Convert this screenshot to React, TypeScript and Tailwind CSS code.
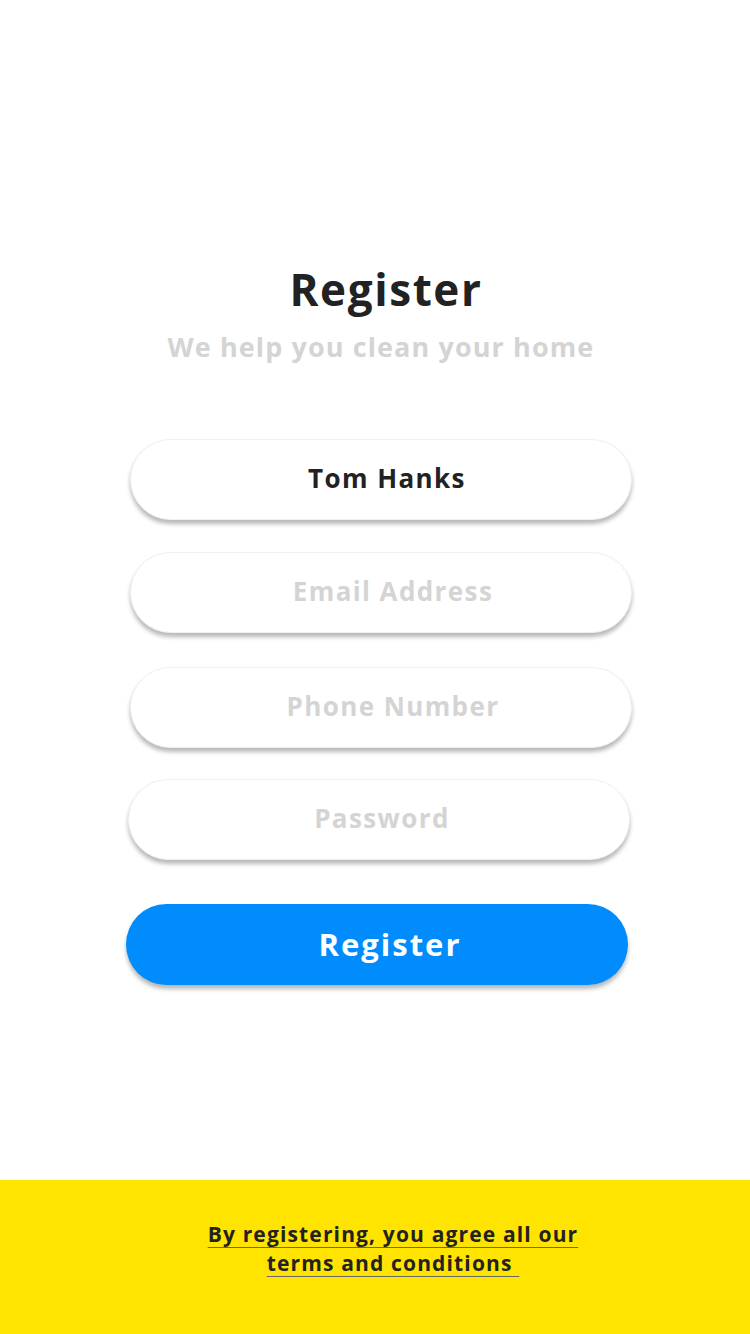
import { useState } from "react"

function Field({ value, placeholder, type = "text", onChange, className = "" }: { value: string; placeholder: string; type?: string; onChange: (v: string) => void; className?: string }) {
  return (
    <input
      type={type}
      value={value}
      placeholder={placeholder}
      onChange={(e) => onChange(e.target.value)}
      className={`w-[502px] h-[81px] rounded-full bg-white border border-[#f0f0f0] shadow-[0_4px_4px_rgba(0,0,0,0.28)] text-center text-[26px] font-bold tracking-[1.4px] text-[#222] placeholder:text-[#d4d4d4] outline-none pb-[3px] ${className}`}
    />
  )
}

export default function App() {
  const [name, setName] = useState("Tom Hanks")
  const [email, setEmail] = useState("")
  const [phone, setPhone] = useState("")
  const [password, setPassword] = useState("")

  return (
    <div className="w-[750px] h-[1334px] bg-white flex flex-col font-['Open_Sans','Noto_Sans',sans-serif]">
      <div className="flex-1 flex flex-col items-center pt-[267px]">
        {/* Header */}
        <h1 className="text-[44px] leading-none font-bold text-[#222] tracking-[1.6px] pl-[22px]">Register</h1>
        <p className="mt-[22px] text-[27px] leading-none font-bold text-[#d4d4d4] tracking-[1.1px] pl-[12px]">We help you clean your home</p>

        {/* Form */}
        <form className="mt-[79px] flex flex-col items-center" onSubmit={(e) => e.preventDefault()}>
          <Field value={name} placeholder="Full Name" onChange={setName} className="ml-[12px] pl-[12px]" />
          <Field value={email} placeholder="Email Address" type="email" onChange={setEmail} className="mt-[32px] ml-[12px] pl-[24px]" />
          <Field value={phone} placeholder="Phone Number" type="tel" onChange={setPhone} className="mt-[34px] ml-[12px] pl-[24px]" />
          <Field value={password} placeholder="Password" type="password" onChange={setPassword} className="mt-[31px] ml-[8px] pl-[6px]" />
          <button
            type="submit"
            className="mt-[44px] ml-[4px] w-[502px] h-[81px] rounded-full bg-[#008cfc] shadow-[0_4px_4px_rgba(0,0,0,0.28)] text-white text-[31px] font-bold tracking-[2px] pl-[26px]"
          >
            Register
          </button>
        </form>
      </div>

      {/* Footer */}
      <div className="h-[154px] bg-[#ffe400] flex justify-center pt-[40px]">
        <a href="#" className="w-[400px] ml-[36px] text-center text-[21px] leading-[29px] font-bold text-[#222] tracking-[1.15px] underline underline-offset-[5px] decoration-1 decoration-[#666]">
          By registering, you agree all our terms and conditions&nbsp;
        </a>
      </div>
    </div>
  )
}
